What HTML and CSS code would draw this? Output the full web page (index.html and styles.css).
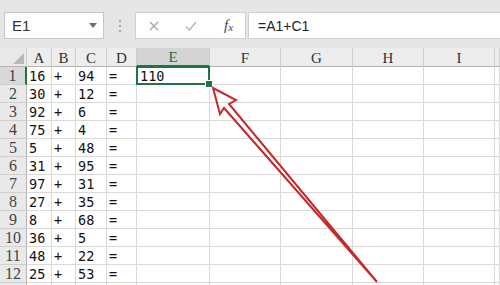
FILE: index.html
```html
<!DOCTYPE html>
<html lang="zh-CN">
<head>
    <meta charset="UTF-8">
    <title>Excel - A1+C1</title>
    <link rel="stylesheet" href="styles.css">
</head>
<body>
    <div class="formula-bar">
        <div class="name-box">
            <span>E1</span>
            <span class="dropdown"></span>
        </div>
        <div class="grip"><i></i><i></i><i></i></div>
        <div class="fx-buttons">
            <svg class="fx-icon" width="14" height="14" viewBox="0 0 14 14"><path d="M3 3 L11 11 M11 3 L3 11" stroke="#a6a6a6" stroke-width="1.4" fill="none"/></svg>
            <svg class="fx-icon" width="14" height="14" viewBox="0 0 14 14"><path d="M2 7.5 L5.5 11 L12 3" stroke="#b4b4b4" stroke-width="1.4" fill="none"/></svg>
            <span class="fx-label">f<sub>x</sub></span>
        </div>
        <div class="formula-input">=A1+C1</div>
    </div>

    <div class="sheet-wrap">
        <div class="sheet">
            <div class="corner"><span class="corner-tri"></span></div>
            <div class="col-head">A</div>
            <div class="col-head">B</div>
            <div class="col-head">C</div>
            <div class="col-head">D</div>
            <div class="col-head active">E</div>
            <div class="col-head">F</div>
            <div class="col-head">G</div>
            <div class="col-head">H</div>
            <div class="col-head">I</div>
            <div class="col-head"></div>

            <div class="row-head active">1</div>
            <div class="cell">16</div><div class="cell">+</div><div class="cell">94</div><div class="cell">=</div>
            <div class="cell selected">110</div><div class="cell"></div><div class="cell"></div><div class="cell"></div><div class="cell"></div><div class="cell"></div>

            <div class="row-head">2</div>
            <div class="cell">30</div><div class="cell">+</div><div class="cell">12</div><div class="cell">=</div>
            <div class="cell"></div><div class="cell"></div><div class="cell"></div><div class="cell"></div><div class="cell"></div><div class="cell"></div>

            <div class="row-head">3</div>
            <div class="cell">92</div><div class="cell">+</div><div class="cell">6</div><div class="cell">=</div>
            <div class="cell"></div><div class="cell"></div><div class="cell"></div><div class="cell"></div><div class="cell"></div><div class="cell"></div>

            <div class="row-head">4</div>
            <div class="cell">75</div><div class="cell">+</div><div class="cell">4</div><div class="cell">=</div>
            <div class="cell"></div><div class="cell"></div><div class="cell"></div><div class="cell"></div><div class="cell"></div><div class="cell"></div>

            <div class="row-head">5</div>
            <div class="cell">5</div><div class="cell">+</div><div class="cell">48</div><div class="cell">=</div>
            <div class="cell"></div><div class="cell"></div><div class="cell"></div><div class="cell"></div><div class="cell"></div><div class="cell"></div>

            <div class="row-head">6</div>
            <div class="cell">31</div><div class="cell">+</div><div class="cell">95</div><div class="cell">=</div>
            <div class="cell"></div><div class="cell"></div><div class="cell"></div><div class="cell"></div><div class="cell"></div><div class="cell"></div>

            <div class="row-head">7</div>
            <div class="cell">97</div><div class="cell">+</div><div class="cell">31</div><div class="cell">=</div>
            <div class="cell"></div><div class="cell"></div><div class="cell"></div><div class="cell"></div><div class="cell"></div><div class="cell"></div>

            <div class="row-head">8</div>
            <div class="cell">27</div><div class="cell">+</div><div class="cell">35</div><div class="cell">=</div>
            <div class="cell"></div><div class="cell"></div><div class="cell"></div><div class="cell"></div><div class="cell"></div><div class="cell"></div>

            <div class="row-head">9</div>
            <div class="cell">8</div><div class="cell">+</div><div class="cell">68</div><div class="cell">=</div>
            <div class="cell"></div><div class="cell"></div><div class="cell"></div><div class="cell"></div><div class="cell"></div><div class="cell"></div>

            <div class="row-head">10</div>
            <div class="cell">36</div><div class="cell">+</div><div class="cell">5</div><div class="cell">=</div>
            <div class="cell"></div><div class="cell"></div><div class="cell"></div><div class="cell"></div><div class="cell"></div><div class="cell"></div>

            <div class="row-head">11</div>
            <div class="cell">48</div><div class="cell">+</div><div class="cell">22</div><div class="cell">=</div>
            <div class="cell"></div><div class="cell"></div><div class="cell"></div><div class="cell"></div><div class="cell"></div><div class="cell"></div>

            <div class="row-head">12</div>
            <div class="cell">25</div><div class="cell">+</div><div class="cell">53</div><div class="cell">=</div>
            <div class="cell"></div><div class="cell"></div><div class="cell"></div><div class="cell"></div><div class="cell"></div><div class="cell"></div>

            <div class="row-head"></div>
            <div class="cell"></div><div class="cell"></div><div class="cell"></div><div class="cell"></div>
            <div class="cell"></div><div class="cell"></div><div class="cell"></div><div class="cell"></div><div class="cell"></div><div class="cell"></div>
        </div>

        <!-- annotation arrow drawn over the sheet -->
        <svg class="arrow" width="500" height="285" viewBox="0 0 500 285">
            <polygon points="213,88 236,100 229,104 377,282 224,108 220,114" fill="none" stroke="#c42a2c" stroke-width="2" stroke-linejoin="miter"/>
        </svg>
    </div>
</body>
</html>
```

FILE: styles.css
```css
* {
    margin: 0;
    padding: 0;
    box-sizing: border-box;
}

body {
    width: 500px;
    height: 285px;
    overflow: hidden;
    background: #e6e6e6;
    font-family: "Liberation Sans", Arial, sans-serif;
    position: relative;
}

/* formula bar */
.formula-bar {
    display: flex;
    align-items: flex-end;
    height: 48px;
    padding: 0 0 9px 4px;
}

.name-box {
    width: 100px;
    height: 27px;
    background: #fff;
    border: 1px solid #c6c6c6;
    display: flex;
    align-items: center;
    justify-content: space-between;
    padding: 0 6px 0 7px;
    font-size: 15px;
    color: #333;
}

.dropdown {
    width: 0;
    height: 0;
    border-left: 4px solid transparent;
    border-right: 4px solid transparent;
    border-top: 5px solid #707070;
}

.grip {
    width: 31px;
    height: 27px;
    display: flex;
    flex-direction: column;
    align-items: center;
    justify-content: center;
    gap: 3px;
}

.grip i {
    width: 2px;
    height: 2px;
    background: #a8a8a8;
}

.fx-buttons {
    width: 111px;
    height: 27px;
    background: #fff;
    border: 1px solid #d0d0d0;
    display: flex;
    align-items: center;
    padding-left: 11px;
}

.fx-icon {
    margin-right: 23px;
}

.fx-label {
    font-family: "Liberation Serif", serif;
    font-style: italic;
    font-size: 15px;
    color: #444;
    margin-left: 3px;
}

.fx-label sub {
    font-size: 11px;
    vertical-align: -1px;
}

.formula-input {
    flex: 1;
    height: 27px;
    margin-left: 2px;
    background: #fff;
    border: 1px solid #d0d0d0;
    border-right: none;
    display: flex;
    align-items: center;
    padding-left: 9px;
    font-size: 14px;
    color: #222;
}

/* sheet */
.sheet-wrap {
    height: 237px;
    overflow: hidden;
}

.sheet {
    display: grid;
    grid-template-columns: 27px 25px 24px 31px 30px 73px 71px 72px 71px 71px 5px;
    grid-template-rows: 19px repeat(13, 18px);
    background: #fff;
}

.corner,
.col-head,
.row-head {
    background: #e9e9e9;
    border-right: 1px solid #cfcfcf;
    border-bottom: 1px solid #b4b4b4;
    font-family: "Liberation Serif", serif;
    color: #333;
    display: flex;
    align-items: center;
    justify-content: center;
}

.corner {
    align-items: flex-end;
    justify-content: flex-end;
    padding: 0 2px 2px 0;
}

.corner-tri {
    width: 0;
    height: 0;
    border-left: 11px solid transparent;
    border-bottom: 11px solid #b9b9b9;
}

.col-head {
    background: #ededed;
    font-size: 15px;
    padding-top: 2px;
}

.col-head.active {
    background: #d4d4d4;
    color: #2b6b45;
    border-bottom: 2px solid #217346;
}

.row-head {
    font-size: 16px;
    border-bottom-color: #d0d0d0;
    border-right-color: #b4b4b4;
    color: #444;
}

.row-head.active {
    background: #d9d9d9;
    border-right: 2px solid #217346;
}

.cell {
    border-right: 1px solid #d9d9d9;
    border-bottom: 1px solid #d9d9d9;
    font-family: "DejaVu Sans Mono", monospace;
    font-size: 13.5px;
    color: #111;
    padding-left: 2px;
    display: flex;
    align-items: center;
}

.cell.selected {
    position: relative;
    border: 2px solid #217346;
    margin: -1px 0 0 -1px;
    padding-left: 2px;
}

.cell.selected::after {
    content: "";
    position: absolute;
    right: -5px;
    bottom: -5px;
    width: 6px;
    height: 6px;
    background: #217346;
    border: 1px solid #fff;
}

.arrow {
    position: absolute;
    left: 0;
    top: 0;
    pointer-events: none;
}
```
